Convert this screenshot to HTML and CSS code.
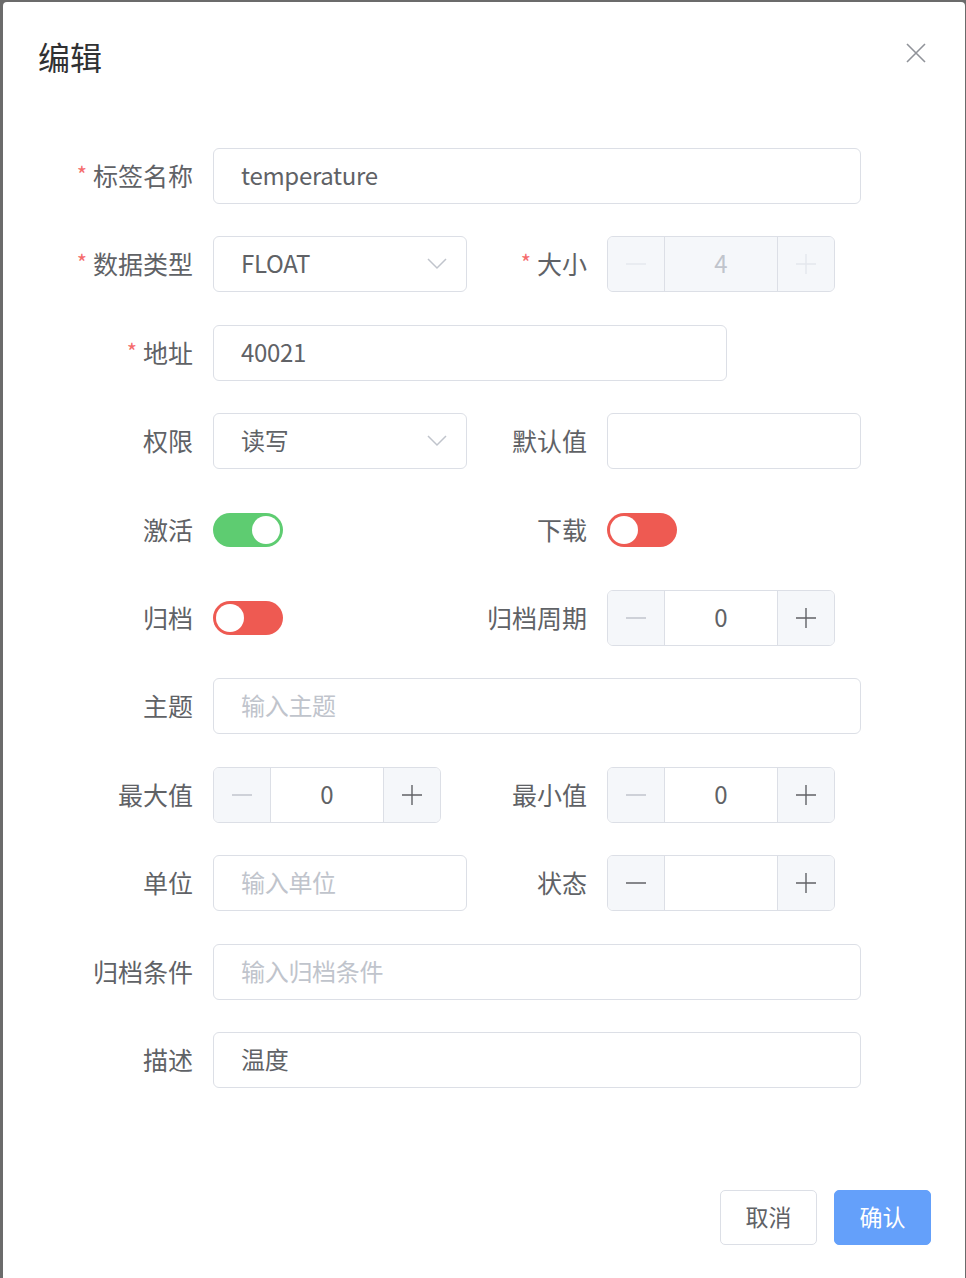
FILE: index.html
```html
<!DOCTYPE html>
<html lang="zh-CN">
<head>
	<meta charset="UTF-8">
	<title>编辑</title>
	<link rel="stylesheet" href="styles.css">
</head>
<body>
	<div class="dialog">
		<div class="dialog-header">
			<span class="dialog-title">编辑</span>
			<a class="dialog-close" href="javascript:;">
				<svg width="20" height="20" viewBox="0 0 20 20"><path d="M1 1 L19 19 M19 1 L1 19" stroke="#909399" stroke-width="1.6" fill="none"/></svg>
			</a>
		</div>

		<form class="form">
			<!-- 标签名称 -->
			<label class="label required">标签名称</label>
			<div class="control full"><input class="input" type="text" value="temperature"></div>

			<!-- 数据类型 / 大小 -->
			<label class="label required">数据类型</label>
			<div class="control">
				<div class="select">
					<input class="input" type="text" value="FLOAT" readonly>
					<svg class="arrow" width="20" height="12" viewBox="0 0 20 12"><path d="M1 1 L10 10 L19 1" stroke="#c0c4cc" stroke-width="1.5" fill="none"/></svg>
				</div>
			</div>
			<label class="label required">大小</label>
			<div class="control">
				<div class="number disabled">
					<span class="num-btn minus"><svg width="20" height="20" viewBox="0 0 20 20"><path d="M0 10 H20" stroke="currentColor" stroke-width="1.4"/></svg></span>
					<input class="num-val" type="text" value="4" disabled>
					<span class="num-btn plus"><svg width="20" height="20" viewBox="0 0 20 20"><path d="M0 10 H20 M10 0 V20" stroke="currentColor" stroke-width="1.4"/></svg></span>
				</div>
			</div>

			<!-- 地址 -->
			<label class="label required">地址</label>
			<div class="control full"><input class="input addr" type="text" value="40021"></div>

			<!-- 权限 / 默认值 -->
			<label class="label">权限</label>
			<div class="control">
				<div class="select">
					<input class="input" type="text" value="读写" readonly>
					<svg class="arrow" width="20" height="12" viewBox="0 0 20 12"><path d="M1 1 L10 10 L19 1" stroke="#c0c4cc" stroke-width="1.5" fill="none"/></svg>
				</div>
			</div>
			<label class="label">默认值</label>
			<div class="control"><input class="input" type="text" value=""></div>

			<!-- 激活 / 下载 -->
			<label class="label">激活</label>
			<div class="control"><span class="switch on"><span class="knob"></span></span></div>
			<label class="label">下载</label>
			<div class="control"><span class="switch off"><span class="knob"></span></span></div>

			<!-- 归档 / 归档周期 -->
			<label class="label">归档</label>
			<div class="control"><span class="switch off"><span class="knob"></span></span></div>
			<label class="label">归档周期</label>
			<div class="control">
				<div class="number">
					<span class="num-btn minus off"><svg width="20" height="20" viewBox="0 0 20 20"><path d="M0 10 H20" stroke="currentColor" stroke-width="1.4"/></svg></span>
					<input class="num-val" type="text" value="0">
					<span class="num-btn plus"><svg width="20" height="20" viewBox="0 0 20 20"><path d="M0 10 H20 M10 0 V20" stroke="currentColor" stroke-width="1.4"/></svg></span>
				</div>
			</div>

			<!-- 主题 -->
			<label class="label">主题</label>
			<div class="control full"><input class="input" type="text" placeholder="输入主题"></div>

			<!-- 最大值 / 最小值 -->
			<label class="label">最大值</label>
			<div class="control">
				<div class="number">
					<span class="num-btn minus off"><svg width="20" height="20" viewBox="0 0 20 20"><path d="M0 10 H20" stroke="currentColor" stroke-width="1.4"/></svg></span>
					<input class="num-val" type="text" value="0">
					<span class="num-btn plus"><svg width="20" height="20" viewBox="0 0 20 20"><path d="M0 10 H20 M10 0 V20" stroke="currentColor" stroke-width="1.4"/></svg></span>
				</div>
			</div>
			<label class="label">最小值</label>
			<div class="control">
				<div class="number">
					<span class="num-btn minus off"><svg width="20" height="20" viewBox="0 0 20 20"><path d="M0 10 H20" stroke="currentColor" stroke-width="1.4"/></svg></span>
					<input class="num-val" type="text" value="0">
					<span class="num-btn plus"><svg width="20" height="20" viewBox="0 0 20 20"><path d="M0 10 H20 M10 0 V20" stroke="currentColor" stroke-width="1.4"/></svg></span>
				</div>
			</div>

			<!-- 单位 / 状态 -->
			<label class="label">单位</label>
			<div class="control"><input class="input" type="text" placeholder="输入单位"></div>
			<label class="label">状态</label>
			<div class="control">
				<div class="number">
					<span class="num-btn minus"><svg width="20" height="20" viewBox="0 0 20 20"><path d="M0 10 H20" stroke="currentColor" stroke-width="1.4"/></svg></span>
					<input class="num-val" type="text" value="">
					<span class="num-btn plus"><svg width="20" height="20" viewBox="0 0 20 20"><path d="M0 10 H20 M10 0 V20" stroke="currentColor" stroke-width="1.4"/></svg></span>
				</div>
			</div>

			<!-- 归档条件 -->
			<label class="label">归档条件</label>
			<div class="control full"><input class="input" type="text" placeholder="输入归档条件"></div>

			<!-- 描述 -->
			<label class="label">描述</label>
			<div class="control full"><input class="input" type="text" value="温度"></div>
		</form>

		<div class="dialog-footer">
			<a class="btn" href="javascript:;">取消</a>
			<a class="btn primary" href="javascript:;">确认</a>
		</div>
	</div>
</body>
</html>
```

FILE: styles.css
```css
*{
	margin:0;
	padding:0;
	box-sizing:border-box;
}
html,body{
	height:100%;
	overflow:hidden;
}
body{
	background:#6b6b6b;
	font-family:"Noto Sans CJK SC","Noto Sans",sans-serif;
	color:#606266;
}
.dialog{
	margin:2px 1px 0 3px;
	min-height:1290px;
	background:#fff;
	border-radius:4px;
}
.dialog-header{
	display:flex;
	justify-content:space-between;
	align-items:flex-start;
	padding:38px 39px 0 35px;
}
.dialog-title{
	font-size:32px;
	line-height:32px;
	color:#303133;
}
.dialog-close{
	display:block;
	width:20px;
	height:20px;
	margin-top:3px;
}
.dialog-close svg{
	display:block;
}

/* 表单 */
.form{
	display:grid;
	grid-template-columns:170px 254px 100px 254px;
	grid-auto-rows:56px;
	column-gap:20px;
	row-gap:32.4px;
	padding:76px 0 0 20px;
}
.label{
	font-size:25px;
	line-height:54px;
	text-align:right;
	color:#606266;
	white-space:nowrap;
}
.label.required:before{
	content:"*";
	color:#f56c6c;
	font-size:22px;
	margin-right:6px;
	vertical-align:top;
	position:relative;
	top:-2px;
}
.control{
	display:flex;
	align-items:center;
}
.control.full{
	grid-column:2 / 5;
}
.input{
	width:100%;
	height:56px;
	border:1px solid #dcdfe6;
	border-radius:6px;
	padding:0 27px 3px;
	font-family:inherit;
	font-size:24px;
	letter-spacing:-0.3px;
	color:#606266;
	background:#fff;
	outline:none;
}
.input::placeholder{
	color:#c0c4cc;
}
.input.addr{
	width:514px;
}
.select{
	position:relative;
	width:100%;
}
.select .arrow{
	position:absolute;
	right:20px;
	top:22px;
}

/* 计数器 */
.number{
	display:flex;
	width:228px;
	height:56px;
	border:1px solid #dcdfe6;
	border-radius:6px;
	overflow:hidden;
}
.num-btn{
	display:flex;
	align-items:center;
	justify-content:center;
	width:57px;
	background:#f5f7fa;
	color:#606266;
}
.num-btn.minus{
	border-right:1px solid #dcdfe6;
}
.num-btn.plus{
	border-left:1px solid #dcdfe6;
}
.num-btn.off{
	color:#c0c4cc;
}
.num-val{
	flex:1;
	min-width:0;
	border:0;
	outline:none;
	padding-bottom:3px;
	text-align:center;
	font-family:inherit;
	font-size:24px;
	color:#606266;
	background:#fff;
}
.number.disabled,
.number.disabled .num-val{
	background:#f5f7fa;
}
.number.disabled .num-val{
	color:#c0c4cc;
}
.number.disabled .num-btn{
	color:#e4e7ed;
}

/* 开关 */
.switch{
	display:flex;
	align-items:center;
	width:70px;
	height:34px;
	border-radius:17px;
	padding:0 3px;
}
.switch.on{
	background:#5ecc71;
	justify-content:flex-end;
}
.switch.off{
	background:#ee5a52;
}
.knob{
	width:28px;
	height:28px;
	border-radius:50%;
	background:#fff;
}

/* 底部按钮 */
.dialog-footer{
	display:flex;
	justify-content:flex-end;
	gap:17px;
	padding:102px 34px 0 0;
}
.btn{
	display:flex;
	align-items:center;
	justify-content:center;
	width:97px;
	height:55px;
	padding-bottom:2px;
	border:1px solid #dcdfe6;
	border-radius:5px;
	font-size:23px;
	color:#606266;
	text-decoration:none;
	background:#fff;
}
.btn.primary{
	background:#64a0fa;
	border-color:#64a0fa;
	color:#fff;
}
```
